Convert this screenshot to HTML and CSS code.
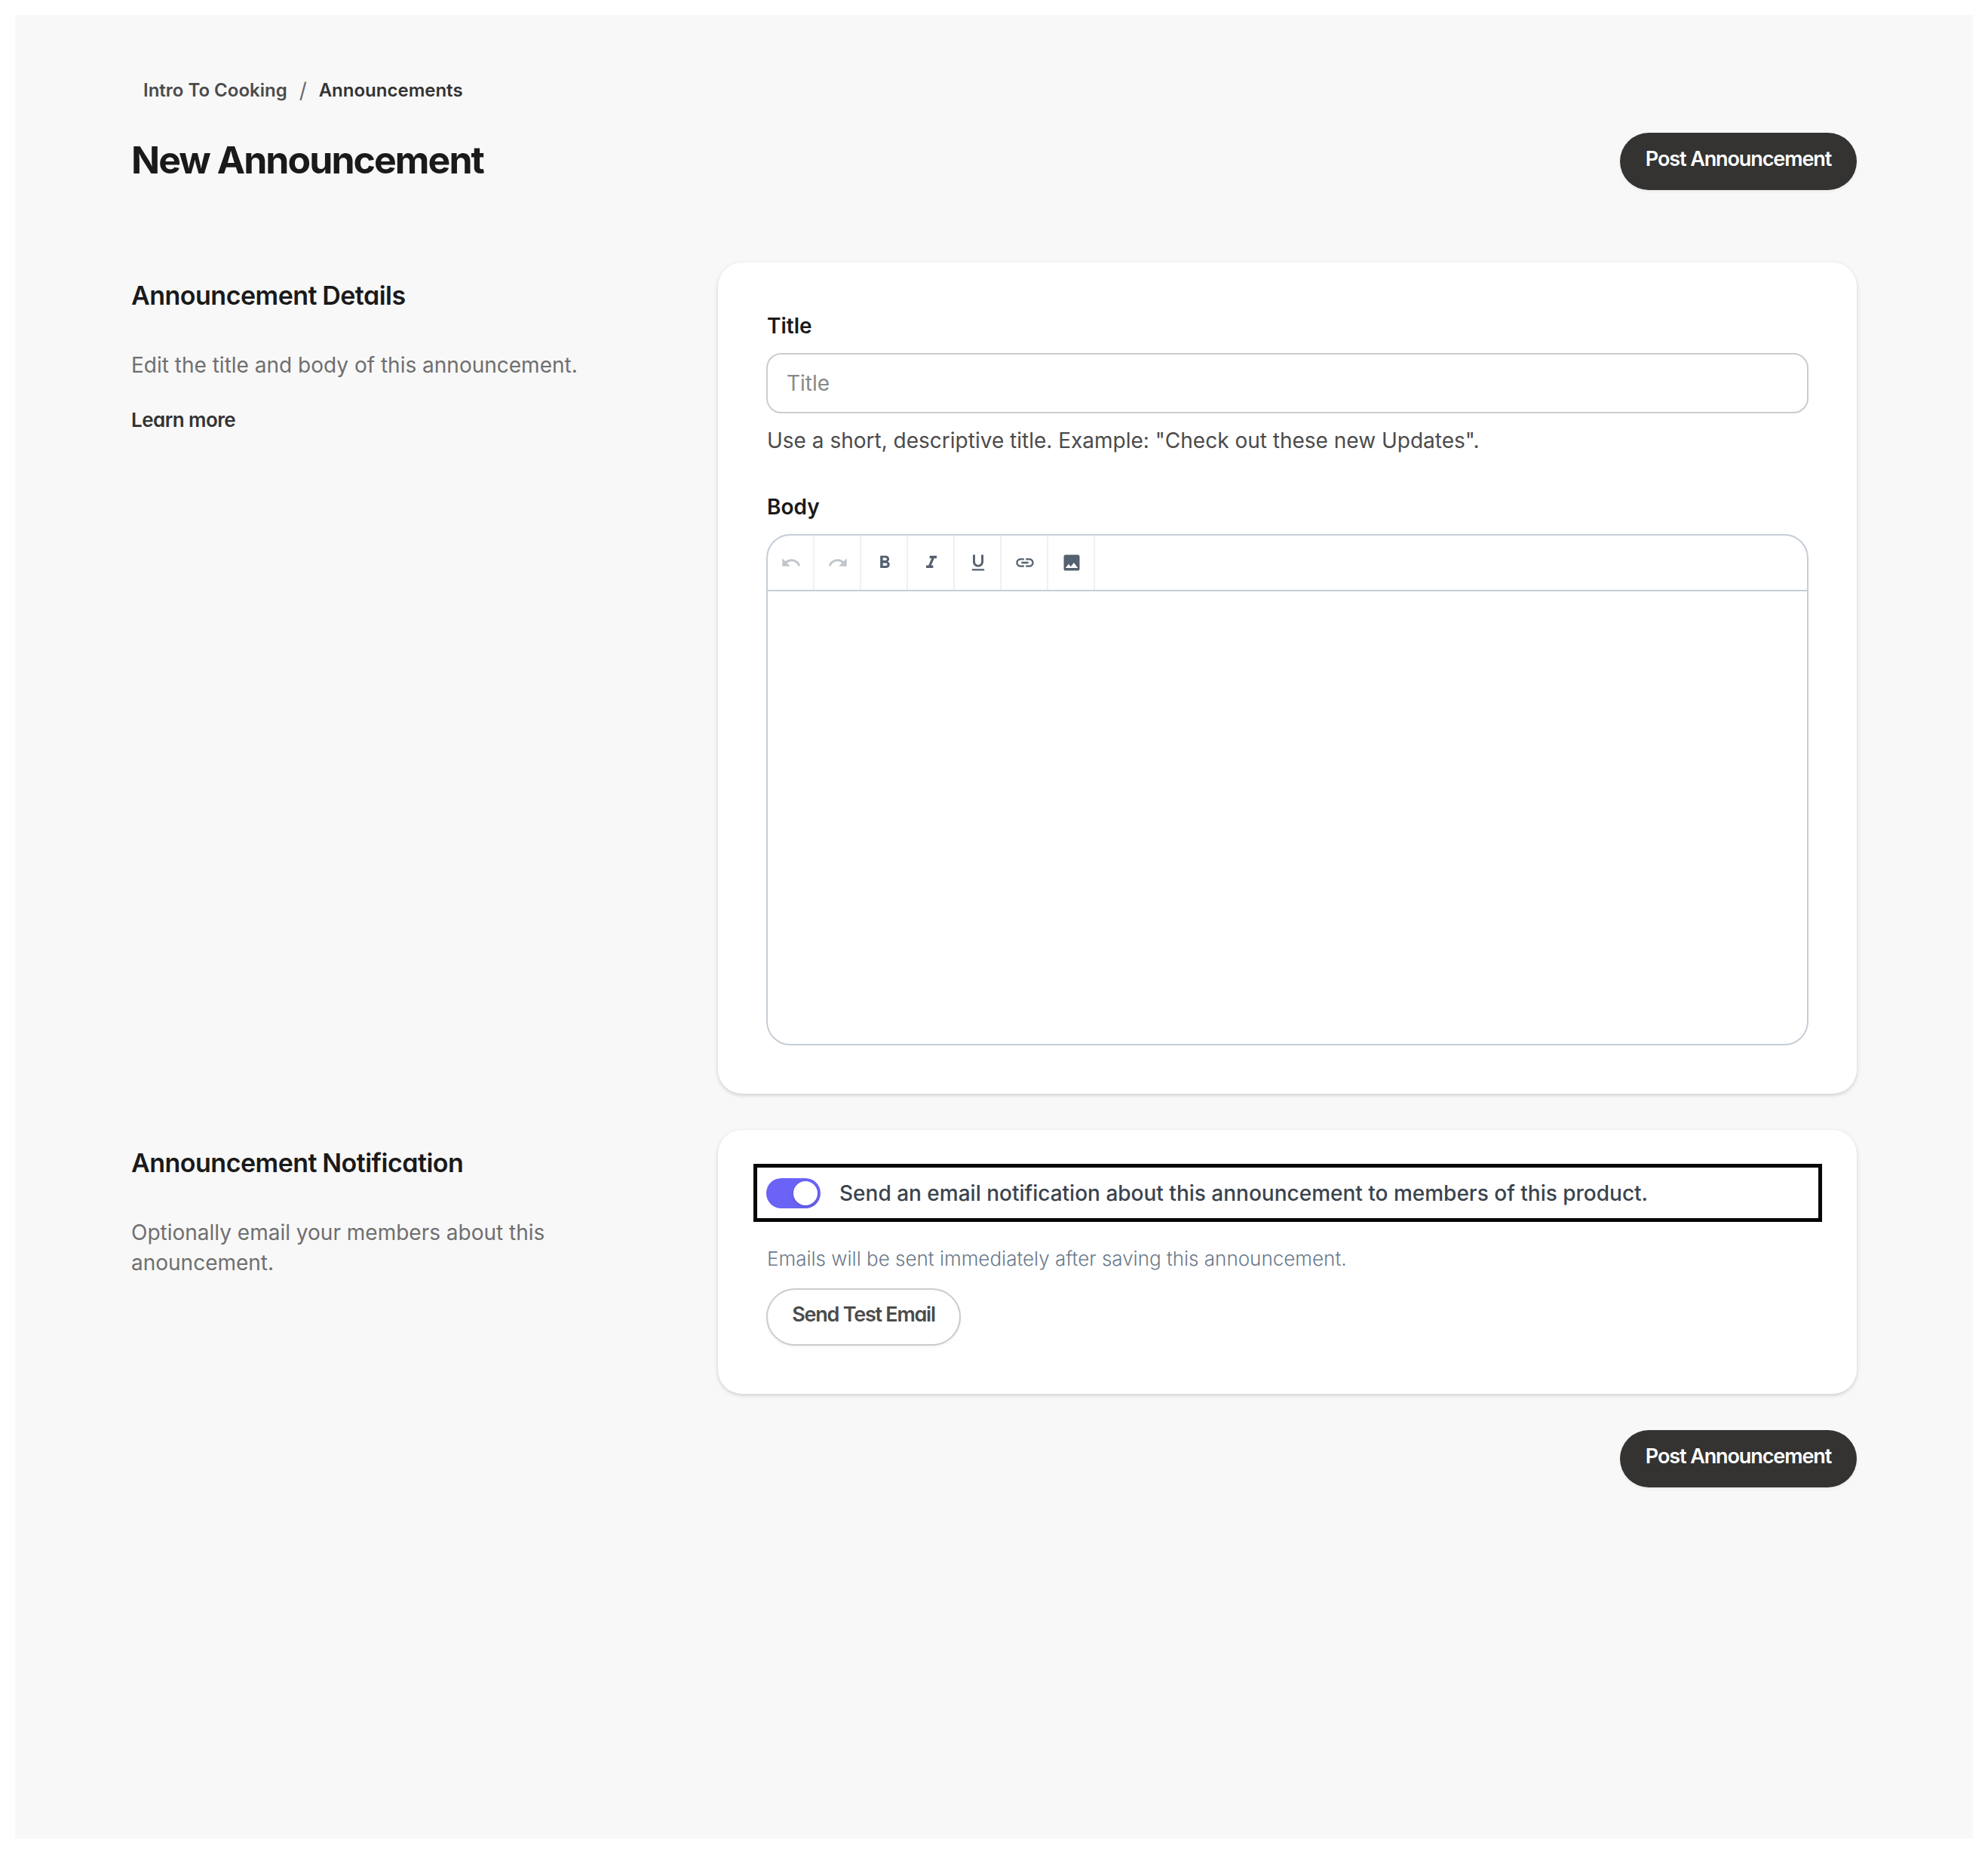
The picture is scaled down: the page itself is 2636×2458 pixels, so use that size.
FILE: index.html
```html
<!DOCTYPE html>
<html lang="en">
<head>
    <meta charset="UTF-8">
    <meta name="viewport" content="width=device-width, initial-scale=1.0">
    <title>New Announcement</title>
    <link rel="stylesheet" href="styles.css">
</head>
<body>

<main class="page">
    <nav class="breadcrumb">
        <a class="crumb">Intro To Cooking</a>
        <span class="crumb-separator">/</span>
        <a class="crumb crumb-current">Announcements</a>
    </nav>

    <header class="page-header">
        <h1 class="page-title">New Announcement</h1>
        <button class="button button-primary">Post Announcement</button>
    </header>

    <section class="section">
        <div class="section-info">
            <h2 class="section-title">Announcement Details</h2>
            <p class="section-text">Edit the title and body of this announcement.</p>
            <a class="learn-more">Learn more</a>
        </div>
        <div class="card">
            <div class="field">
                <label class="field-label" for="title">Title</label>
                <input class="text-input" id="title" type="text" placeholder="Title">
                <p class="field-help">Use a short, descriptive title. Example: "Check out these new Updates".</p>
            </div>

            <div class="field">
                <label class="field-label">Body</label>
                <div class="editor">
                    <div class="toolbar">
                        <button class="tool tool-disabled" aria-label="Undo">
                            <svg class="icon" viewBox="0 0 24 24"><path d="M12.5 8c-2.65 0-5.05.99-6.9 2.6L2 7v9h9l-3.62-3.62c1.39-1.16 3.16-1.88 5.12-1.88 3.54 0 6.55 2.31 7.6 5.5l2.37-.78C21.08 11.03 17.15 8 12.5 8z"/></svg>
                        </button>
                        <button class="tool tool-disabled" aria-label="Redo">
                            <svg class="icon" viewBox="0 0 24 24"><path d="M18.4 10.6C16.55 8.99 14.15 8 11.5 8c-4.65 0-8.58 3.03-9.96 7.22L3.9 16c1.05-3.19 4.05-5.5 7.6-5.5 1.95 0 3.73.72 5.12 1.88L13 16h9V7l-3.6 3.6z"/></svg>
                        </button>
                        <button class="tool" aria-label="Bold">
                            <svg class="icon" viewBox="0 0 24 24"><path d="M15.6 10.79c.97-.67 1.65-1.77 1.65-2.79 0-2.26-1.75-4-4-4H7v14h7.04c2.09 0 3.71-1.7 3.71-3.79 0-1.52-.86-2.82-2.15-3.42zM10 6.5h3c.83 0 1.5.67 1.5 1.5s-.67 1.5-1.5 1.5h-3v-3zm3.5 9H10v-3h3.5c.83 0 1.5.67 1.5 1.5s-.67 1.5-1.5 1.5z"/></svg>
                        </button>
                        <button class="tool" aria-label="Italic">
                            <svg class="icon" viewBox="0 0 24 24"><path d="M10 4v3h2.21l-3.42 8H6v3h8v-3h-2.21l3.42-8H18V4z"/></svg>
                        </button>
                        <button class="tool" aria-label="Underline">
                            <svg class="icon" viewBox="0 0 24 24"><path d="M12 17c3.31 0 6-2.69 6-6V3h-2.5v8c0 1.93-1.57 3.5-3.5 3.5S8.5 12.93 8.5 11V3H6v8c0 3.31 2.69 6 6 6zm-7 2v2h14v-2H5z"/></svg>
                        </button>
                        <button class="tool" aria-label="Link">
                            <svg class="icon" viewBox="0 0 24 24"><path d="M3.9 12c0-1.71 1.39-3.1 3.1-3.1h4V7H7c-2.76 0-5 2.24-5 5s2.24 5 5 5h4v-1.9H7c-1.71 0-3.1-1.39-3.1-3.1zM8 13h8v-2H8v2zm9-6h-4v1.9h4c1.71 0 3.1 1.39 3.1 3.1s-1.39 3.1-3.1 3.1h-4V17h4c2.76 0 5-2.24 5-5s-2.24-5-5-5z"/></svg>
                        </button>
                        <button class="tool" aria-label="Image">
                            <svg class="icon" viewBox="0 0 24 24"><path d="M21 19V5c0-1.1-.9-2-2-2H5c-1.1 0-2 .9-2 2v14c0 1.1.9 2 2 2h14c1.1 0 2-.9 2-2zM8.5 13.5l2.5 3.01L14.5 12l4.5 6H5l3.5-4.5z"/></svg>
                        </button>
                    </div>
                    <div class="editor-body" contenteditable="true"></div>
                </div>
            </div>
        </div>
    </section>

    <section class="section">
        <div class="section-info">
            <h2 class="section-title">Announcement Notification</h2>
            <p class="section-text">Optionally email your members about this anouncement.</p>
        </div>
        <div class="card">
            <div class="toggle-row">
                <span class="toggle"><span class="toggle-knob"></span></span>
                <span class="toggle-label">Send an email notification about this announcement to members of this product.</span>
            </div>
            <p class="email-note">Emails will be sent immediately after saving this announcement.</p>
            <button class="button button-outline">Send Test Email</button>
        </div>
    </section>

    <footer class="page-footer">
        <button class="button button-primary">Post Announcement</button>
    </footer>
</main>

</body>
</html>
```
FILE: styles.css
```css
* {
    box-sizing: border-box;
    margin: 0;
    padding: 0;
}
body {
    padding: 20px;
    background-color: #fff;
    color: #1a1a1a;
    font-family: "Inter", sans-serif;
    font-size: 28px;
    line-height: 40px;
}
.page {
    min-height: 2418px;
    padding: 84px 154px 0;
    background-color: #f8f8f8;
}

/* header */
.breadcrumb {
    display: flex;
    align-items: center;
    height: 32px;
    padding-left: 16px;
    font-size: 24px;
    line-height: 32px;
    font-weight: 600;
}
.crumb {
    color: #4b4b4b;
}
.crumb-current {
    color: #333;
}
.crumb-separator {
    margin: 0 16px;
    width: 10px;
    color: #6b6b6b;
    font-size: 28px;
    font-weight: 400;
    text-align: center;
}
.page-header {
    display: flex;
    justify-content: space-between;
    align-items: center;
    margin: 40px 0 96px;
}
.page-title {
    padding-bottom: 4px;
    font-size: 50px;
    font-weight: 700;
    letter-spacing: -1.95px;
}

/* buttons */
.button {
    height: 76px;
    padding: 0 33px 7px;
    border: none;
    border-radius: 38px;
    box-shadow: 0 2px 4px rgba(0, 0, 0, 0.05);
    font-family: "Inter", sans-serif;
    font-size: 27px;
    font-weight: 600;
    font-feature-settings: "cv11"; /* single-storey a */
    letter-spacing: -1.1px;
    cursor: pointer;
}
.button-primary {
    width: 314px;
    background-color: #343332;
    color: #fff;
}
.button-outline {
    display: block;
    width: 258px;
    padding: 0 0 7px;
    border: 2px solid #ccc;
    background-color: #fff;
    color: #4b4b4b;
    letter-spacing: -1.25px;
}

/* sections */
.section {
    display: grid;
    grid-template-columns: 730px 1fr;
    column-gap: 48px;
    margin-bottom: 48px;
}
.section-info {
    padding-top: 24px;
}
.section-title {
    margin-bottom: 52px;
    font-size: 34px;
    font-weight: 600;
    font-feature-settings: "cv11";
    letter-spacing: -0.5px;
    word-spacing: -1px;
}
.section-text {
    max-width: 640px;
    margin-bottom: 33px;
    color: #6f6f6f;
}
.learn-more {
    display: block;
    color: #333;
    font-size: 26px;
    font-weight: 600;
    font-feature-settings: "cv11";
    letter-spacing: -0.55px;
}
.card {
    padding: 64px;
    border-radius: 32px;
    background-color: #fff;
    box-shadow: 0 2px 6px rgba(0, 0, 0, 0.1), 0 2px 4px rgba(0, 0, 0, 0.08);
}

/* form fields */
.field + .field {
    margin-top: 48px;
}
.field-label {
    display: block;
    margin-bottom: 16px;
    padding-left: 1px;
    font-weight: 600;
}
.text-input {
    display: block;
    width: 100%;
    height: 80px;
    padding: 0 25px;
    border: 2px solid #ccc;
    border-radius: 20px;
    background-color: #fff;
    font-family: "Inter", sans-serif;
    font-size: 28px;
}
.text-input::placeholder {
    color: #888;
}
.field-help {
    margin-top: 16px;
    padding-left: 1px;
    color: #4b4b4b;
}
.editor {
    height: 678px;
    border: 2px solid #c6cdd6;
    border-radius: 32px;
    overflow: hidden;
}
.toolbar {
    display: flex;
    height: 74px;
    border-bottom: 2px solid #c6cdd6;
}
.tool {
    display: flex;
    justify-content: center;
    align-items: center;
    width: 62px;
    padding-left: 1px;
    border: none;
    border-right: 2px solid #f0f1f2;
    background: none;
    color: #556170;
    cursor: pointer;
}
.tool-disabled {
    color: #bfc5cb;
}
.icon {
    width: 28px;
    height: 28px;
    fill: currentColor;
}
.editor-body {
    height: 600px;
}

/* notification */
.toggle-row {
    display: flex;
    align-items: center;
    position: relative;
    margin-bottom: 47px;
}
/* highlight frame around the toggle row */
.toggle-row::after {
    content: "";
    position: absolute;
    top: -19px;
    right: -18px;
    bottom: -18px;
    left: -17px;
    border: 5px solid #070707;
}
.toggle {
    display: flex;
    justify-content: flex-end;
    width: 72px;
    height: 40px;
    margin-right: 25px;
    padding: 4px;
    border-radius: 20px;
    background-color: #6b63f5;
}
.toggle-knob {
    width: 32px;
    height: 32px;
    border-radius: 50%;
    background-color: #fff;
    box-shadow: 0 2px 4px rgba(0, 0, 0, 0.15);
}
.toggle-label {
    color: #3b444e;
    font-weight: 500;
}
.email-note {
    margin-bottom: 19px;
    padding-left: 1px;
    color: #6b7a8b;
    font-size: 26px;
    font-weight: 300;
}

.page-footer {
    display: flex;
    justify-content: flex-end;
}
```
